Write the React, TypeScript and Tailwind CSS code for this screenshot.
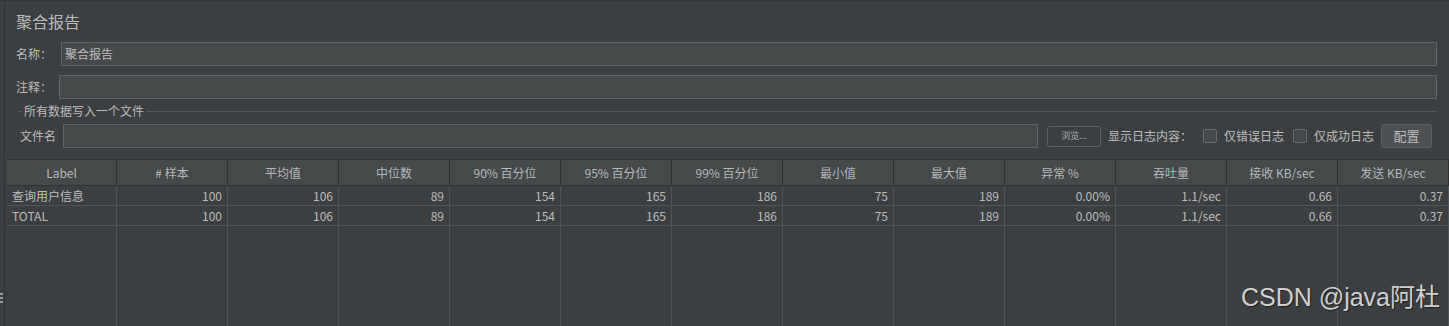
import React from "react";

const FONT = { fontFamily: '"Noto Sans CJK SC", "Noto Sans", sans-serif' };

const headers = [
  "Label",
  "# 样本",
  "平均值",
  "中位数",
  "90% 百分位",
  "95% 百分位",
  "99% 百分位",
  "最小值",
  "最大值",
  "异常 %",
  "吞吐量",
  "接收 KB/sec",
  "发送 KB/sec",
];

const rows = [
  ["查询用户信息", "100", "106", "89", "154", "165", "186", "75", "189", "0.00%", "1.1/sec", "0.66", "0.37"],
  ["TOTAL", "100", "106", "89", "154", "165", "186", "75", "189", "0.00%", "1.1/sec", "0.66", "0.37"],
];

function Checkbox() {
  return <span className="shrink-0 w-[14px] h-[14px] border border-[#6b6e70] rounded-[2px] bg-[#43494a]" />;
}

export default function App() {
  return (
    <div
      className="relative w-[1449px] h-[326px] overflow-hidden bg-[#3c3f41] text-[#bbbbbb] flex border-t border-[#333638]"
      style={FONT}
    >
      {/* 左侧分隔条 */}
      <div className="w-[5px] shrink-0 border-r border-[#2f3133]" />

      <div className="flex-1 flex flex-col min-w-0">
        <div className="pl-[11px] pr-[12px]">
          <div className="text-[16px] leading-[20px] pt-[10px] h-[41px]">聚合报告</div>

          <div className="flex items-center h-[24px] text-[12px]">
            <span className="w-[45px] shrink-0">名称：</span>
            <div className="flex-1 h-[24px] bg-[#45494a] border border-[#646464] flex items-center pl-[3px] text-[12px]">
              聚合报告
            </div>
          </div>

          <div className="flex items-center h-[24px] mt-[9px] text-[12px]">
            <span className="w-[43px] shrink-0">注释：</span>
            <div className="flex-1 h-[24px] bg-[#45494a] border border-[#646464]" />
          </div>

          {/* 所有数据写入一个文件 */}
          <div className="mt-[6px] ml-[2px] flex items-center h-[12px] text-[12px]">
            <span className="w-[4px] border-t border-[#555759]" />
            <span className="px-[2px]">所有数据写入一个文件</span>
            <span className="flex-1 border-t border-[#555759]" />
          </div>

          <div className="flex items-center h-[24px] mt-[7px] text-[12px] pl-[4px] whitespace-nowrap">
            <span className="w-[43px] shrink-0">文件名</span>
            <div className="shrink-0 w-[975px] h-[24px] bg-[#45494a] border border-[#646464]" />
            <div className="shrink-0 ml-[9px] w-[54px] h-[21px] rounded-[3px] border border-[#5e6163] flex items-center justify-center text-[9px] text-[#a9b0b3]">
              浏览...
            </div>
            <span className="shrink-0 ml-[7px]">显示日志内容：</span>
            <span className="shrink-0 ml-[11px] flex items-center gap-[7px]">
              <Checkbox />
              仅错误日志
            </span>
            <span className="shrink-0 ml-[9px] flex items-center gap-[7px]">
              <Checkbox />
              仅成功日志
            </span>
            <div className="shrink-0 ml-[7px] w-[51px] h-[24px] rounded-[3px] border border-[#5e6163] bg-[#4c5052] flex items-center justify-center text-[13px]">
              配置
            </div>
          </div>
        </div>

        {/* 表格 */}
        <div className="mt-[11px] ml-[2px] flex-1 flex flex-col border-t border-[#2f3133] text-[12px]">
          <div className="grid grid-cols-[110px_repeat(12,111px)] h-[26px] bg-[#45494a] border-b border-[#303234]">
            {headers.map((h) => (
              <div key={h} className="border-r border-[#2f3133] flex items-center justify-center text-[#b4b8ba] whitespace-nowrap">
                {h}
              </div>
            ))}
          </div>
          {rows.map((r, i) => (
            <div key={i} className="grid grid-cols-[110px_repeat(12,111px)] h-[20px] border-b border-[#515456]">
              {r.map((c, j) => (
                <div
                  key={j}
                  className={
                    "border-r border-[#515456] flex items-center px-[5px] whitespace-nowrap " +
                    (j === 0 ? "justify-start" : "justify-end")
                  }
                >
                  {c}
                </div>
              ))}
            </div>
          ))}
          <div className="flex-1 grid grid-cols-[110px_repeat(12,111px)]">
            {headers.map((h) => (
              <div key={h} className="border-r border-[#515456]" />
            ))}
          </div>
        </div>
      </div>

      {/* 左侧拖拽点 */}
      <div className="absolute left-0 top-[292px] flex flex-col gap-[2px]">
        <span className="w-[3px] h-[2px] bg-[#9a9a9a]" />
        <span className="w-[3px] h-[2px] bg-[#9a9a9a]" />
        <span className="w-[3px] h-[2px] bg-[#9a9a9a]" />
      </div>

      {/* 水印 */}
      <div
        className="absolute left-[1241px] top-[280px] text-[25px] leading-[32px] text-[#cfcfcf] whitespace-nowrap [text-shadow:1px_1px_1px_rgba(0,0,0,0.5)]"
        style={{ fontFamily: '"Liberation Sans", "Noto Sans CJK SC", sans-serif' }}
      >
        CSDN @java阿杜
      </div>
    </div>
  );
}
